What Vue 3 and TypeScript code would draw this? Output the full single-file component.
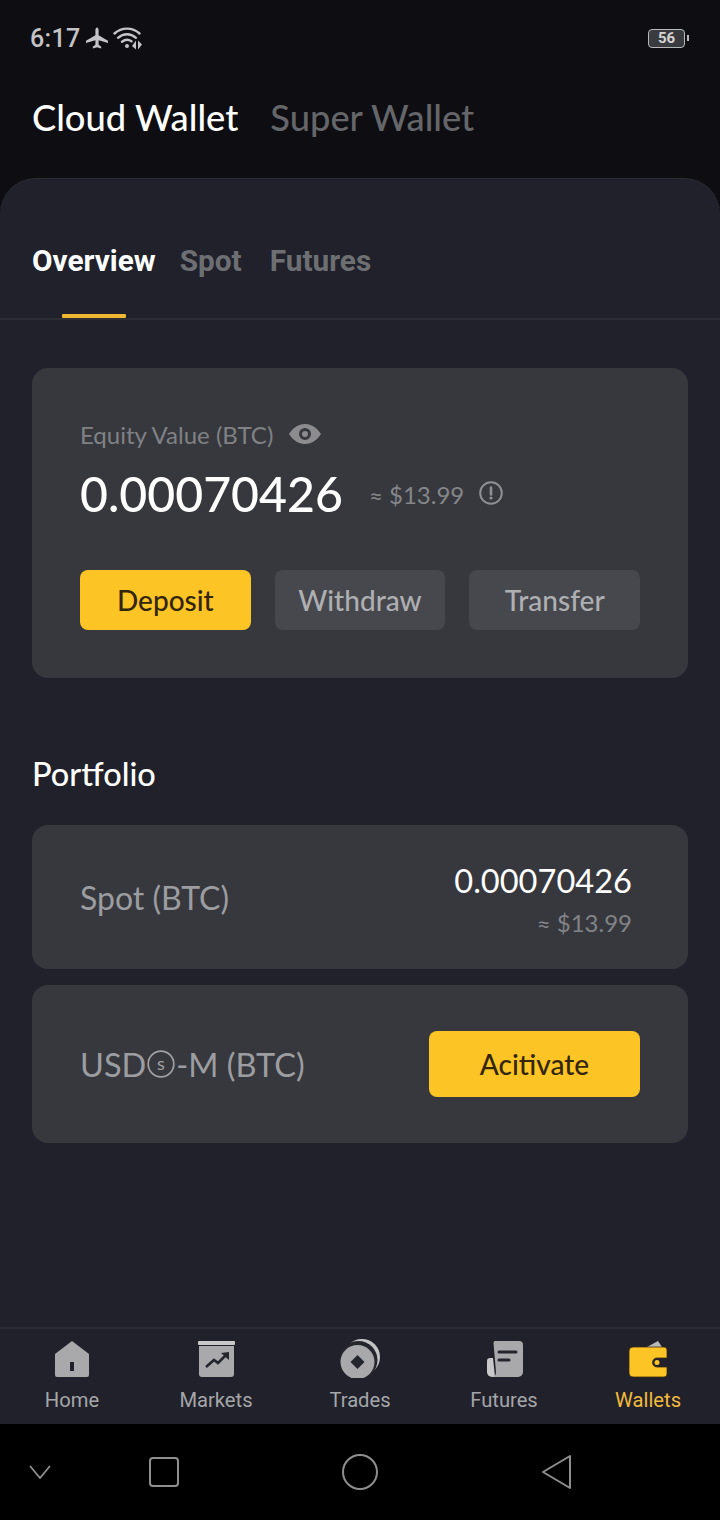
<script setup lang="ts">
const navItems = [
  { key: 'home', label: 'Home' },
  { key: 'markets', label: 'Markets' },
  { key: 'trades', label: 'Trades' },
  { key: 'futures', label: 'Futures' },
  { key: 'wallets', label: 'Wallets' },
]
</script>

<template>
  <div class="phone">
    <header class="top">
      <div class="status">
        <div class="status-left">
          <span class="time">6:17</span>
          <svg class="plane" width="24" height="24" viewBox="0 0 24 24"><path fill="#c4c4c6" d="M12 1.500c1 0 1.600 1.400 1.600 3v4.800l9.400 5.400v2.200l-9.400-2.700v4.600l2.600 1.900v1.800L12 21.300l-4.200 1.200v-1.800l2.600-1.900v-4.600L1 16.900v-2.200l9.400-5.400V4.500c0-1.600.6-3 1.600-3z"/></svg>
          <svg class="wifi" width="30" height="24" viewBox="0 0 30 24" fill="none" stroke="#c4c4c6" stroke-width="2.400" stroke-linecap="round">
            <path d="M1.500 7.500C8.500 1 19.500 1 26.500 7.500"/>
            <path d="M5 11.800C10.500 7 17.500 7 23 11.800"/>
            <path d="M9 15.800c3-2.400 6.500-2.400 9.500-.5"/>
            <circle cx="14" cy="20" r="2" fill="#c4c4c6" stroke="none"/>
            <path d="M23 14.500v9l-4-3.500zM25 14.500v9l4-5z" fill="#c4c4c6" stroke="none"/>
          </svg>
        </div>
        <div class="battery">
          <span class="battery-body">56</span>
          <span class="battery-tip"></span>
        </div>
      </div>
      <div class="wallet-tabs">
        <span class="wallet-active">Cloud Wallet</span>
        <span class="wallet-muted">Super Wallet</span>
      </div>
    </header>

    <main class="panel">
      <nav class="tabs">
        <span class="tab tab-active">Overview</span>
        <span class="tab">Spot</span>
        <span class="tab tab-last">Futures</span>
      </nav>

      <section class="content">
        <div class="card equity">
          <div class="equity-label">
            <span>Equity Value (BTC)</span>
            <svg width="34" height="24" viewBox="0 0 34 24"><path fill="#8c8c90" fill-rule="evenodd" d="M17 2C25 2 30.500 8 33 12c-2.500 4-8 10-16 10S3.500 16 1 12C3.500 8 9 2 17 2zm0 4a6 6 0 1 0 0 12 6 6 0 0 0 0-12zm0 3a3 3 0 1 1 0 6 3 3 0 0 1 0-6z"/></svg>
          </div>
          <div class="equity-value">
            <span class="big">0.00070426</span>
            <span class="approx">≈ $13.99</span>
            <svg width="26" height="26" viewBox="0 0 26 26" fill="none"><circle cx="13" cy="13" r="10.800" stroke="#909094" stroke-width="2"/><path d="M13 7.500v7" stroke="#909094" stroke-width="2.600" stroke-linecap="round"/><circle cx="13" cy="18" r="1.600" fill="#909094"/></svg>
          </div>
          <div class="actions">
            <button class="btn btn-primary">Deposit</button>
            <button class="btn btn-dark">Withdraw</button>
            <button class="btn btn-dark">Transfer</button>
          </div>
        </div>

        <h2 class="portfolio">Portfolio</h2>

        <div class="card row row-spot">
          <span class="row-label">Spot (BTC)</span>
          <div class="row-values">
            <span class="row-value">0.00070426</span>
            <span class="row-approx">≈ $13.99</span>
          </div>
        </div>

        <div class="card row row-usd">
          <span class="row-label usd">USD<svg class="s-mark" width="28" height="28" viewBox="0 0 28 28"><circle cx="14" cy="14" r="12.800" fill="none" stroke="#a0a0a4" stroke-width="1.700"/><text x="14" y="20" font-size="18" text-anchor="middle" fill="#a0a0a4" font-family="Lato, sans-serif">s</text></svg>-M (BTC)</span>
          <button class="btn btn-primary btn-activate">Acitivate</button>
        </div>
      </section>

      <footer class="bottom-nav">
        <div v-for="item in navItems" :key="item.key" class="nav-item" :class="{ 'nav-active': item.key === 'wallets' }">
          <svg v-if="item.key === 'home'" width="36" height="40" viewBox="0 0 36 40"><path fill="#a9a9ac" fill-rule="evenodd" d="M18 3l17 13v21a2 2 0 0 1-2 2H3a2 2 0 0 1-2-2V16L18 3zm-2 21v9h4v-9h-4z"/></svg>
          <svg v-else-if="item.key === 'markets'" width="40" height="40" viewBox="0 0 40 40"><rect x="2" y="3" width="37" height="4" rx="1" fill="#c8c8ca"/><path fill="#a9a9ac" d="M3 8h35v28a3 3 0 0 1-3 3H6a3 3 0 0 1-3-3V8z"/><path d="M10 29l8-7 4 3 7-7" fill="none" stroke="#24252d" stroke-width="2.600"/><path d="M25 15l8-1v8z" fill="#24252d"/></svg>
          <svg v-else-if="item.key === 'trades'" width="42" height="40" viewBox="0 0 42 40"><circle cx="23" cy="19" r="18" fill="#c4c4c6"/><circle cx="19.500" cy="22" r="19" fill="#24252d"/><circle cx="18.500" cy="24" r="17" fill="#a9a9ac"/><path d="M18.500 17l7 7-7 7-7-7z" fill="#24252d"/></svg>
          <svg v-else-if="item.key === 'futures'" width="38" height="40" viewBox="0 0 38 40"><path d="M8 20H5a3 3 0 0 0-3 3v11a5 5 0 0 0 5 5h3z" fill="#c8c8ca"/><path d="M10 3h24a4 4 0 0 1 4 4v27a5 5 0 0 1-5 5H8c1.500-.5 3-2 3-5L8.500 5c0-1 .5-2 1.500-2z" fill="#a9a9ac"/><path d="M14 14h17M14 22h10" stroke="#24252d" stroke-width="3" stroke-linecap="round"/></svg>
          <svg v-else width="40" height="40" viewBox="0 0 40 40"><path d="M19 9l11-6 4 6z" fill="#b9b9bb"/><path d="M5 9h31a3 3 0 0 1 3 3v8H29a4.500 4.500 0 0 0 0 9h10v7a3 3 0 0 1-3 3H5a4 4 0 0 1-4-4V13a4 4 0 0 1 4-4z" fill="#fcc425" stroke="#3a2c0c" stroke-width=".8"/><circle cx="29" cy="24.500" r="2.500" fill="#fcc425"/></svg>
          <span class="nav-label">{{ item.label }}</span>
        </div>
      </footer>
    </main>

    <div class="system-nav">
      <svg class="sys-chevron" width="22" height="14" viewBox="0 0 22 14" fill="none" stroke="#8f8f8f" stroke-width="1.800"><path d="M1 1l10 12L21 1"/></svg>
      <div class="sys-main">
        <svg width="30" height="30" viewBox="0 0 30 30" fill="none" stroke="#8f8f8f" stroke-width="2"><rect x="1" y="1" width="28" height="28" rx="3"/></svg>
        <svg width="36" height="36" viewBox="0 0 36 36" fill="none" stroke="#8f8f8f" stroke-width="2"><circle cx="18" cy="18" r="17"/></svg>
        <svg width="31" height="36" viewBox="0 0 31 36" fill="none" stroke="#8f8f8f" stroke-width="2" stroke-linejoin="round"><path d="M29 2v32L2 18z"/></svg>
      </div>
    </div>
  </div>
</template>

<style>
html, body { margin: 0; background: #000; }
</style>

<style scoped>
.phone {
  width: 720px;
  height: 1520px;
  display: flex;
  flex-direction: column;
  background: #0d0d12;
  font-family: Lato, "Liberation Sans", sans-serif;
  overflow: hidden;
}
.top { height: 178px; padding: 0 32px; box-sizing: border-box; flex: none; }
.status {
  height: 76px;
  display: flex;
  align-items: center;
  justify-content: space-between;
}
.status-left { display: flex; align-items: center; gap: 4px; margin-left: -2px; }
.time { font: 500 25px Roboto, sans-serif; color: #c4c4c6; letter-spacing: .3px; margin-right: 1px; }
.battery { display: flex; align-items: center; gap: 2px; margin-right: -1px; }
.battery-body {
  width: 37px; height: 19px; box-sizing: border-box;
  border: 1.500px solid #b8b8ba; border-radius: 4px; background: #3a3b3f;
  color: #d4d4d6; font: 700 15px/16px Roboto, sans-serif; text-align: center;
}
.battery-tip { width: 2px; height: 6px; background: #b8b8ba; }
.wallet-tabs { display: flex; gap: 32px; padding-top: 19px; font-size: 36.300px; line-height: 44px; font-weight: 500; }
.wallet-active { color: #fff; }
.wallet-muted { color: #65666a; }

.panel {
  height: 1246px;
  flex: none;
  display: flex;
  flex-direction: column;
  background: #20212a;
  border-radius: 36px 36px 0 0;
  box-shadow: inset 0 1px 0 #2a2b32;
}
.tabs {
  height: 142px;
  flex: none;
  box-sizing: border-box;
  padding: 65px 32px 0;
  display: flex;
  gap: 24px;
  border-bottom: 2px solid #2c2d35;
}
.tab { position: relative; font: 700 29.800px/36px Roboto, sans-serif; color: #6e6f73; height: 36px; }
.tab-active { color: #fff; }
.tab-last { margin-left: 4px; }
.tab-active::after {
  content: "";
  position: absolute;
  left: 30px;
  width: 64px;
  top: 71px;
  height: 4px;
  background: #f0b832;
  border-radius: 1px;
}
.content { flex: 1; padding: 48px 32px 0; }
.card { background: #37383d; border-radius: 16px; box-sizing: border-box; }
.equity { height: 310px; padding: 48px; }
.equity-label { display: flex; align-items: center; gap: 15px; height: 36px; color: #808185; font-size: 24px; }
.equity-value { display: flex; align-items: center; margin-top: 9px; height: 64px; }
.big { color: #fff; font-size: 48.200px; font-weight: 500; }
.approx { color: #85868a; font-size: 24px; margin: 2px 14px 0 26px; }
.actions { display: flex; gap: 24px; margin-top: 45px; }
.btn {
  flex: 1;
  height: 60px;
  border: 0;
  border-radius: 8px;
  font-family: Lato, sans-serif;
  font-size: 28px;
  font-weight: 500;
  padding: 0;
}
.btn-primary { background: #fcc425; color: #33260a; }
.btn-dark { background: #47484d; color: #aeafb2; }
.portfolio { margin: 76px 0 31px; font-size: 32.500px; line-height: 40px; font-weight: 500; color: #fff; }
.row { display: flex; align-items: center; justify-content: space-between; padding: 0 48px; }
.row-spot { height: 144px; padding-right: 56px; }
.row-usd { height: 158px; margin-top: 16px; }
.row-label { color: #9c9da1; font-size: 32px; display: flex; align-items: center; }
.usd { font-size: 32.500px; }
.s-mark { margin: 0 1px; }
.row-values { display: flex; flex-direction: column; align-items: flex-end; gap: 7px; margin-top: 5px; }
.row-value { color: #fff; font-size: 32.600px; line-height: 40px; }
.row-approx { color: #828387; font-size: 24px; line-height: 30px; }
.btn-activate { flex: none; width: 211px; height: 66px; }

.bottom-nav {
  height: 97px;
  flex: none;
  display: flex;
  box-sizing: border-box;
  border-top: 2px solid #2a2b33;
  padding-top: 9px;
}
.nav-item { flex: 1; display: flex; flex-direction: column; align-items: center; justify-content: flex-start; }
.nav-label { font: 400 20.200px/26px Roboto, sans-serif; color: #a5a6a9; margin-top: 9px; }
.nav-active .nav-label { color: #f3ba3c; }

.system-nav {
  height: 96px;
  flex: none;
  background: #000;
  display: flex;
  align-items: center;
  padding-left: 29px;
  gap: 98px;
}
.sys-main { display: flex; align-items: center; gap: 163px; }
</style>
